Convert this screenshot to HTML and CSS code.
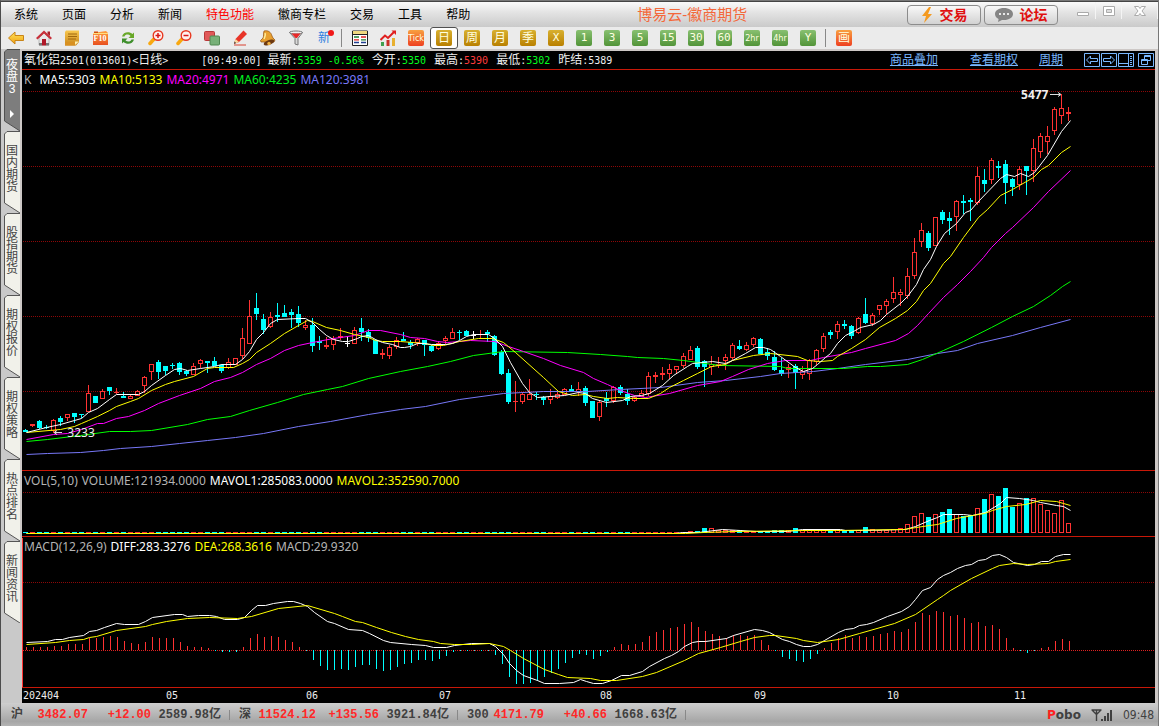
FILE: index.html
```html
<!DOCTYPE html>
<html lang="zh-CN">
<head>
<meta charset="utf-8">
<title>博易云-徽商期货</title>
<link rel="stylesheet" href="styles.css">
</head>
<body>
<svg class="defs" width="0" height="0" aria-hidden="true">
  <defs>
    <linearGradient id="gold" x1="0" y1="0" x2="0" y2="1"><stop offset="0" stop-color="#ffe45c"/><stop offset="1" stop-color="#f0a010"/></linearGradient>
    <linearGradient id="amber" x1="0" y1="0" x2="0" y2="1"><stop offset="0" stop-color="#f8c850"/><stop offset="1" stop-color="#c88418"/></linearGradient>
    <linearGradient id="ember" x1="0" y1="0" x2="0" y2="1"><stop offset="0" stop-color="#ffa040"/><stop offset="1" stop-color="#e85020"/></linearGradient>
  </defs>
  <symbol id="tab-light" viewBox="0 0 16 82"><path d="M.5 72V3L3 .5H16V82Z" fill="#f1f1ea"/><path d="M16 .5H3L.5 3V72L16 82" fill="none" stroke="#555"/></symbol>
  <symbol id="tab-dark" viewBox="0 0 16 82"><path d="M.5 72V3L3 .5H16V82Z" fill="#7d7d7d"/><path d="M16 .5H3L.5 3V72L16 82" fill="none" stroke="#505050"/></symbol>
</svg>

<div class="window">
  <header class="titlebar">
    <nav class="menu">
      <button>系统</button><button>页面</button><button>分析</button><button>新闻</button><button class="hot">特色功能</button><button>徽商专栏</button><button>交易</button><button>工具</button><button>帮助</button>
    </nav>
    <h1 class="app-title">博易云-徽商期货</h1>
    <div class="actions">
      <button class="action"><svg width="12" height="16" viewBox="0 0 12 16"><path d="M8 0 1 9h4L3 16l8-9H7l3-7Z" fill="#f49a20"/></svg>交易</button>
      <button class="action"><svg width="18" height="14" viewBox="0 0 18 14"><path d="M9 0c5 0 9 2.500 9 6s-4 6-9 6H7l-4 2 .6-3C1.300 10 0 8.200 0 6 0 2.500 4 0 9 0Z" fill="#858585"/><path d="M4 5h2v2H4zM8 5h2v2H8zM12 5h2v2h-2z" fill="#e8e8e8"/></svg>论坛</button>
    </div>
    <div class="window-controls">
      <button aria-label="最小化"><svg width="12" height="12" viewBox="0 0 12 12"><path d="M.5 7.500h11v3H.5z" fill="#fff" stroke="#aaa"/></svg></button>
      <button aria-label="最大化"><svg width="12" height="12" viewBox="0 0 12 12"><path d="M.5 1.500h11v9H.5z" fill="#fff" stroke="#aaa"/><path d="M3.500 4.500h5v3h-5z" fill="#ddd" stroke="#aaa"/></svg></button>
      <button aria-label="关闭"><svg width="12" height="12" viewBox="0 0 12 12"><path d="M.5 1.500h4L6 3.500l1.500-2h4L8 6l3.500 4.500h-4L6 8.500l-1.500 2h-4L4 6Z" fill="#fff" stroke="#aaa"/></svg></button>
    </div>
  </header>

  <div class="toolbar">
    <button aria-label="后退"><svg viewBox="0 0 16 16"><path d="M.5 8 7 2v3.500h8.500v5H7V14Z" fill="url(#gold)" stroke="#c88418"/></svg></button>
    <button aria-label="首页"><svg viewBox="0 0 16 16"><path d="M3 8 8 3l5 5v7H3z" fill="#e8e8e8" stroke="#999" stroke-width=".6"/><path d="M11.500 1.500H14V6l-2.500-2z" fill="#a8202a"/><path d="M0 8 8 .5 16 8l-1.500 1.500L8 3.500 1.500 9.500Z" fill="#c8303a"/><path d="M6 9h4v6.500H6z" fill="#b01828"/><path d="M3 13h3v2.500H3zM10 13h3v2.500h-3z" fill="#777"/></svg></button>
    <button aria-label="资讯"><svg viewBox="0 0 16 16"><path d="M2 .5h13V12l-3 3.500H1V2z" fill="url(#amber)"/><path d="M4 4h9M4 6.500h9M4 9h8" stroke="#a06810"/><path d="M1 12h10v3.500H1z" fill="#d89020"/><path d="m11 15 4-3.500h-4z" fill="#fff0b0"/></svg></button>
    <button aria-label="F10" class="f10"><svg viewBox="0 0 16 16"><path d="M1 3 14 1l2 2v12H1z" fill="url(#ember)"/><path d="M1 3.500h15" stroke="#ffe080"/><path d="M2 1.500h4V3H2z" fill="#d05010"/></svg><span>F10</span></button>
    <button aria-label="刷新"><svg viewBox="0 0 16 16"><path d="M2 6.500C3 2 9 .8 12.500 4L14 2.500V8H8.500l2-2C8.500 4 5.500 4 4.500 6.500Z" fill="#68a828"/><path d="M14 9.500c-1 4.500-7 5.700-10.500 2.500L2 13.500V8.500h5.500l-2 2c2 1.500 5 1.500 6-1Z" fill="#3f8f2c"/></svg></button>
    <button aria-label="放大"><svg viewBox="0 0 16 16"><path d="m6 9-4 4.500" stroke="#f8a810" stroke-width="3.500" stroke-linecap="round"/><circle cx="10" cy="5.500" r="4.800" fill="#fff1ef" stroke="#e83820" stroke-width="1.400"/><path d="M7.500 5.500h5M10 3v5" stroke="#d81818" stroke-width="1.500"/></svg></button>
    <button aria-label="缩小"><svg viewBox="0 0 16 16"><path d="m6 9-4 4.500" stroke="#f8a810" stroke-width="3.500" stroke-linecap="round"/><circle cx="10" cy="5.500" r="4.800" fill="#fff1ef" stroke="#e83820" stroke-width="1.400"/><path d="M7.500 5.500h5" stroke="#d81818" stroke-width="1.500"/></svg></button>
    <button aria-label="叠加"><svg viewBox="0 0 16 16"><rect x=".5" y="1.500" width="10" height="9" rx="1" fill="#e05858" stroke="#b83838"/><rect x="6" y="6" width="9.500" height="9" rx="1" fill="#78b078" stroke="#508850"/></svg></button>
    <button aria-label="画线"><svg viewBox="0 0 16 16"><path d="M11.500.5 15 4 7 12l-5 2 1.500-5Z" fill="#e83428"/><path d="M3.500 9 7 12l-5 2z" fill="#f8d8a0"/><path d="m2 14 2-1-1.400-1.400z" fill="#333"/><path d="M2 15h12" stroke="#d84030"/></svg></button>
    <button aria-label="预警"><svg viewBox="0 0 16 16"><path d="M4 1c4-1 7 1 8 5l1 2 2 2-1 2L1 12 .5 10.500 3 8c1-2 0-4 1-7Z" fill="#e8a030" stroke="#905010" stroke-width=".7"/><path d="M5 3c1 2 0 4-1 6" stroke="#fff0a0" stroke-width="1.300" fill="none"/><ellipse cx="9" cy="12.500" rx="5.500" ry="2.500" fill="#6c3810" transform="rotate(-20 9 12.500)"/><circle cx="9" cy="13.500" r="1.700" fill="#f0b040"/></svg></button>
    <button aria-label="筛选"><svg viewBox="0 0 16 16"><path d="M1.500 2.500h13L10 8.500V15l-3-1V8.500Z" fill="#d8d8d8" stroke="#777"/><ellipse cx="8" cy="2.500" rx="6.500" ry="1.500" fill="#eee" stroke="#777"/><path d="M3.500 3.500h9L9 8H7.500Z" fill="#e82828"/></svg></button>
    <button class="new-button">新<i></i></button>
    <i class="divider"></i>
    <button aria-label="报价"><svg viewBox="0 0 16 16"><path d="M.5 1h15v14.500H.5z" fill="#fff" stroke="#222"/><path d="M1 1h14v3H1z" fill="#f0d880"/><path d="M.5 4.500h15" stroke="#222"/><path d="M2 7h5M9 9.800h5" stroke="#208030" stroke-width="1.300"/><path d="M2 9.800h5M9 7h5" stroke="#e02020" stroke-width="1.300"/><path d="M2 12.500h5M9 12.500h5" stroke="#204090" stroke-width="1.300"/></svg></button>
    <button aria-label="走势"><svg viewBox="0 0 16 16"><path d="M1 12h3v4H1z" fill="#40a050"/><path d="M6.500 10h3v6h-3z" fill="#c83028"/><path d="M12 8h3v8h-3z" fill="#e8b030"/><path d="M.5 10 5 5.500l3 2.500 6-6" stroke="#e02020" stroke-width="2" fill="none"/><path d="M11.500.5H16V5Z" fill="#e02020"/></svg></button>
    <button><span class="tile orange narrow">Tick</span></button>
    <button class="selected"><span class="tile gold">日</span></button>
    <button><span class="tile gold">周</span></button>
    <button><span class="tile gold">月</span></button>
    <button><span class="tile gold">季</span></button>
    <button><span class="tile gold latin">X</span></button>
    <button><span class="tile green latin">1</span></button>
    <button><span class="tile green latin">3</span></button>
    <button><span class="tile green latin">5</span></button>
    <button><span class="tile green latin">15</span></button>
    <button><span class="tile green latin">30</span></button>
    <button><span class="tile green latin">60</span></button>
    <button><span class="tile green narrow">2hr</span></button>
    <button><span class="tile green narrow">4hr</span></button>
    <button><span class="tile green latin">Y</span></button>
    <i class="divider"></i>
    <button><span class="tile orange">画</span></button>
  </div>

  <div class="workspace">
    <nav class="tabs">
      <button class="tab active"><svg><use href="#tab-dark"/></svg><span>夜盘3</span><i></i></button>
      <button class="tab"><svg><use href="#tab-light"/></svg><span>国内期货</span></button>
      <button class="tab"><svg><use href="#tab-light"/></svg><span>股指期货</span></button>
      <button class="tab"><svg><use href="#tab-light"/></svg><span>期权报价</span></button>
      <button class="tab"><svg><use href="#tab-light"/></svg><span>期权策略</span></button>
      <button class="tab"><svg><use href="#tab-light"/></svg><span>热点排名</span></button>
      <button class="tab"><svg><use href="#tab-light"/></svg><span>新闻资讯</span></button>
    </nav>

    <main class="charts">
      <div class="quote">
        <span class="instrument">氧化铝<b>2501(013601)&lt;</b>日线<b>&gt;</b></span>
        <span class="time"><b>[09:49:00]</b></span>
        <span class="last">最新<b>:</b><b class="down">5359 -0.56%</b></span>
        <span>今开<b>:</b><b class="down">5350</b></span>
        <span>最高<b>:</b><b class="up">5390</b></span>
        <span>最低<b>:</b><b class="down">5302</b></span>
        <span>昨结<b>:5389</b></span>
        <div class="links">
          <a href="#overlay">商品叠加</a>
          <a href="#options">查看期权</a>
          <a href="#period">周期</a>
        </div>
        <div class="view-buttons">
          <button aria-label="向左"><svg viewBox="0 0 16 14"><path d="M.5.5h15v13H.5zM2.500 7l4-4v2.500h7v3h-7V11Z"/></svg></button>
          <button aria-label="向右"><svg viewBox="0 0 16 14"><path d="M.5.5h15v13H.5zM13.500 7l-4-4v2.500h-7v3h7V11Z"/></svg></button>
          <button aria-label="侧栏"><svg viewBox="0 0 16 14"><path d="M.5.5h15v13H.5zM10.500.5v13M.5 10.500h10M12 3.500h2M12 5.500h2M12 7.500h2M12 9.500h2M12 11.500h2"/></svg></button>
          <button aria-label="窗口" class="apart"><svg viewBox="0 0 16 14"><path d="M.5.5h15v13H.5zM6.500 6V2.500h6v5H10M3.500 6.500h6v5h-6zM6.500 3.500h6M3.500 7.500h6"/></svg></button>
        </div>
      </div>

      <section class="panel price">
        <svg id="price" viewBox="22 70 1133 400" preserveAspectRatio="none"></svg>
        <p class="legend"><span class="k">K</span><span class="white">MA5:5303</span><span class="yellow">MA10:5133</span><span class="magenta">MA20:4971</span><span class="green">MA60:4235</span><span class="violet">MA120:3981</span></p>
        <span class="mark high">5477</span>
        <span class="mark low">3233</span>
      </section>
      <section class="panel">
        <svg id="volume" viewBox="22 471 1133 65" preserveAspectRatio="none"></svg>
        <p class="legend"><span>VOL(5,10)</span><span>VOLUME:121934.0000</span><span class="white">MAVOL1:285083.0000</span><span class="yellow">MAVOL2:352590.7000</span></p>
      </section>
      <section class="panel">
        <svg id="macd" viewBox="22 537 1133 150" preserveAspectRatio="none"></svg>
        <p class="legend"><span>MACD(12,26,9)</span><span class="white">DIFF:283.3276</span><span class="yellow">DEA:268.3616</span><span>MACD:29.9320</span></p>
      </section>
      <div class="axis" id="axis"></div>
    </main>
  </div>

  <footer class="status">
    <div class="index"><span>沪</span><b>3482.07</b><b>+12.00</b><span>2589.98亿</span></div>
    <div class="index"><span>深</span><b>11524.12</b><b>+135.56</b><span>3921.84亿</span></div>
    <div class="index"><span>300</span><b>4171.79</b><b>+40.66</b><span>1668.63亿</span></div>
    <div class="tray">
      <strong><em>P</em>obo</strong>
      <svg width="22" height="12" viewBox="0 0 22 12"><path d="M.5 1h10M1 1l4.500 4.500L10 1M5.500 1v11" fill="none" stroke="#404040" stroke-width="1.400"/><path d="M10 10h2v2h-2zM13 7h2v5h-2zM16 4h2v8h-2zM19 1h2v11h-2z" fill="#404040"/></svg>
      <time>09:48</time>
    </div>
  </footer>
</div>
<script src="chart.js"></script>
</body>
</html>
```
FILE: styles.css
```css
* { box-sizing: border-box; }

body {
  margin: 0;
  font: 12px/16px "Liberation Sans", "Noto Sans CJK SC", sans-serif;
  color: #000;
}

button {
  margin: 0;
  padding: 0;
  border: 0;
  background: none;
  font: inherit;
  color: inherit;
}

.defs { position: absolute; }

.window {
  display: flex;
  flex-direction: column;
  height: 100vh;
  overflow: hidden;
  border-top: 1px solid #777;
  border-left: 1px solid #4c4c4c;
  border-right: 1px solid #777;
  background: #cdc8c6;
}

/* title bar */
.titlebar {
  display: flex;
  align-items: center;
  flex: 0 0 26px;
  border-top: 1px solid #444;
  background: linear-gradient(#fafafa, #e4e4e4 40%, #cacaca);
}

.menu {
  display: flex;
  flex: 0 0 55%;
  gap: 24px;
  padding-left: 13px;
}

.menu .hot { color: #f00; }

.app-title {
  margin: 0;
  font-size: 15px;
  font-weight: 400;
  white-space: nowrap;
  color: #f4683a;
}

.actions {
  display: flex;
  flex: 1;
  justify-content: flex-end;
  gap: 3px;
}

.action {
  display: flex;
  align-items: center;
  justify-content: center;
  gap: 7px;
  width: 74px;
  height: 20px;
  border: 1px solid #8c8c8c;
  border-radius: 4px;
  background: linear-gradient(#f8f8f8, #d2d2d2);
  font-size: 14px;
  font-weight: 700;
  color: #e01010;
}

.window-controls {
  display: grid;
  grid-template-columns: 26px 26px 36px;
  align-self: stretch;
  padding: 0 0 8px 12px;
}

.window-controls button {
  border-right: 1px solid #f4f4f4;
}

.window-controls svg { display: block; margin: 0 auto; }

/* toolbar */
.toolbar {
  display: flex;
  align-items: center;
  flex: 0 0 22px;
  padding-left: 1px;
  background: #ebebeb;
}

.toolbar button {
  position: relative;
  display: flex;
  align-items: center;
  justify-content: center;
  width: 28px;
  height: 22px;
}

.toolbar svg { width: 16px; height: 16px; }

.toolbar .selected {
  border: 1px solid #505050;
  border-radius: 3px;
  background: #fff;
}

.divider {
  width: 1px;
  height: 18px;
  margin: 0 4px 0 3px;
  background: #888;
}

.f10 span {
  position: absolute;
  top: 7px;
  font: 700 8px/10px "Liberation Serif", serif;
  color: #fff;
}

.toolbar .new-button { color: #3080e0; }

.new-button i {
  position: absolute;
  top: 3px;
  right: 4px;
  width: 6px;
  height: 6px;
  border-radius: 3px;
  background: #f01818;
}

.tile {
  display: flex;
  align-items: center;
  justify-content: center;
  width: 16px;
  height: 16px;
  border-radius: 2px;
  font-size: 12px;
  line-height: 16px;
  color: #ffffe0;
}

.gold { background: linear-gradient(#d8b030, #b98000); }
.tile.green { background: linear-gradient(#88c070, #529438); }
.orange { background: linear-gradient(#f8a040, #ee4020); }
.tile.latin { font-family: "DejaVu Sans Mono", monospace; font-size: 11px; }
.tile.narrow { font-family: "Liberation Sans Narrow", "DejaVu Sans Condensed", sans-serif; font-size: 9px; }

/* workspace */
.workspace {
  display: flex;
  flex: 1;
  min-height: 0;
  padding-right: 3px;
}

.tabs {
  display: flex;
  flex-direction: column;
  flex: 0 0 19px;
  padding-left: 3px;
  background: #c9c9c9;
}

.tab {
  position: relative;
  display: flex;
  flex-direction: column;
  align-items: center;
  flex: 0 0 82px;
  width: 16px;
  padding-top: 14px;
  color: #444;
}

.tab svg {
  position: absolute;
  top: 0;
  left: 0;
  width: 16px;
  height: 82px;
}

.tab span {
  position: relative;
  width: 12px;
  line-height: 12px;
  text-align: center;
  word-break: break-all;
}

.tab.active { padding-top: 10px; color: #fff; }

.tab i {
  position: relative;
  margin-top: 15px;
  border: 4px solid transparent;
  border-left: 4px solid #fff;
  border-right: 0;
}

.charts {
  display: grid;
  grid-template-rows: 19px 401fr 66fr 151fr 15px;
  flex: 1;
  min-width: 0;
  margin: 2px 0 0 2px;
  background: #000;
  color: #eee;
}

.quote {
  display: flex;
  align-items: center;
  gap: 8px;
  padding-left: 2px;
  border-bottom: 1px solid #c81808;
  white-space: pre;
}

.quote b {
  font: 10px/16px "DejaVu Sans Mono", monospace;
}

.quote .time { margin-left: 25px; }
.quote .last { margin-left: -2px; }
.quote .down { color: #00ff1e; }
.quote .up { color: #ff3c3c; }

.links {
  display: flex;
  margin-left: auto;
}

.links a { margin-left: 32px; color: #7ab8ff; }
.links a:last-child { margin-left: 21px; }

.view-buttons {
  display: flex;
  gap: 1px;
  padding: 0 1px 0 13px;
}

.view-buttons svg {
  display: block;
  width: 16px;
  height: 14px;
  fill: none;
  stroke: #7ab8ff;
}

.view-buttons .apart { margin-left: 3px; }

.panel {
  position: relative;
  min-height: 0;
  border-bottom: 1px solid #c81808;
}

.panel > svg {
  position: absolute;
  inset: 0;
  width: 100%;
  height: 100%;
}

.legend {
  position: relative;
  display: flex;
  gap: 4px;
  margin: 0;
  padding: 2px 0 0 2px;
  font: 12px/16px "Noto Sans", "DejaVu Sans", sans-serif;
  color: #b4b4b4;
}

.legend .k { margin-right: 4px; }
.white { color: #fff; }
.yellow { color: #ff0; }
.magenta { color: #f0f; }
.legend .green { color: #00f020; }
.violet { color: #7878f8; }

.mark {
  position: absolute;
  font: 700 12px/14px "Noto Sans", sans-serif;
}

.mark.high { top: 4.5%; right: 9.400%; }
.mark.low { top: 89%; left: 4%; font-weight: 400; }

.axis {
  position: relative;
  font: 10px/15px "DejaVu Sans Mono", monospace;
}

.axis span { position: absolute; }

/* chart drawing */
.grid { fill: none; stroke: #8c0808; stroke-dasharray: 1 1; shape-rendering: crispEdges; }
.zero { fill: none; stroke: #e02020; stroke-dasharray: 1 1; shape-rendering: crispEdges; }
.rise { fill: #ff3232; fill-rule: evenodd; shape-rendering: crispEdges; }
.fall { fill: #0ff; shape-rendering: crispEdges; }
.flat { fill: #fff; shape-rendering: crispEdges; }
.line { fill: none; stroke-width: 1; }
.line-white { stroke: #fff; }
.line-yellow { stroke: #ff0; }
.line-magenta { stroke: #f0f; }
.line-green { stroke: #0f0; }
.line-violet { stroke: #7878f8; }
.arrow { fill: none; stroke: #ddd; }

/* status bar */
.status {
  display: flex;
  align-items: center;
  flex: 0 0 23px;
  padding-left: 10px;
  background: linear-gradient(#cecece, #a6a6a6 80%, #b4b4b4);
  font: 700 12px/16px "Liberation Mono", "Noto Sans CJK SC", monospace;
  color: #404040;
}

.index {
  display: grid;
  grid-template-columns: 20px 57px 63px 70px;
  justify-items: end;
  width: 228px;
  padding-right: 8px;
  white-space: nowrap;
  background: linear-gradient(#888, #888) 218px 50% / 1px 10px no-repeat;
}

.index > :first-child { justify-self: start; }
.index b { color: #ff2828; }

.tray {
  display: flex;
  align-items: center;
  gap: 10px;
  margin-left: auto;
  padding-right: 4px;
}

.tray strong { font: 700 12px/16px "DejaVu Sans", sans-serif; }
.tray em { font-style: normal; color: #ff2020; }
.tray time { font: 12px/16px "DejaVu Sans Condensed", sans-serif; }
```
FILE: chart.js
```js
// Each bar: direction (r = rise, c = fall, w = unchanged), high, body top, body bottom, low.
const bars = `c429,430,432,432 r424,424,426,427 c420,421,428,429 c425,427,428,429 r419,420,431,433
c416,418,422,426 r414,414,418,421 c413,413,417,423 c414,414,415,418 r385,393,412,412
c396,396,403,403 r389,391,399,399 c387,387,391,395 r388,392,393,394 c392,396,398,398
r394,396,399,399 r390,391,396,396 r376,377,386,393 r364,364,372,380 c360,362,372,379
c366,366,371,375 c363,365,366,369 c362,363,372,375 c370,371,374,376 r363,366,375,375
r359,360,364,368 c361,361,363,373 c357,361,366,366 c364,365,371,373 r358,362,368,369
r358,358,365,365 r328,338,356,359 r300,316,344,344 c293,308,314,320 c314,319,330,334
r312,317,327,328 c303,315,317,322 c305,313,317,317 c309,312,315,328 c306,314,323,327
r320,325,328,330 c318,325,346,352 c336,341,343,350 r337,345,347,349 r336,339,345,350
r328,336,338,340 w337,343,344,347 r327,330,344,344 c318,328,332,341 c329,332,338,342
c339,340,354,354 r349,353,355,359 r345,347,356,359 r337,340,347,349 c332,339,341,341
c340,342,345,349 r338,339,343,346 c340,340,345,356 c345,346,351,352 r342,343,349,350
r336,338,341,344 r328,332,339,339 c330,332,333,340 c330,331,336,336 w331,335,336,339
r330,334,335,339 c330,332,334,342 c335,336,355,356 c350,352,374,375 c369,373,402,404
r381,401,402,412 r393,394,402,404 r379,394,400,400 c392,394,395,400 c396,397,400,405
r389,396,400,404 r392,394,398,399 r388,389,395,395 c385,389,391,392 r382,389,392,396
c386,388,403,406 c401,401,418,418 r400,402,417,421 c392,398,401,407 r386,387,401,403
c385,387,393,395 c389,394,401,405 r396,397,401,402 r390,393,397,397 r372,376,394,396
r372,375,377,383 r367,373,375,380 r364,369,374,379 r366,366,370,374 r353,356,366,368
r346,350,360,360 c346,348,367,369 c360,361,367,387 r356,364,367,375 r357,364,366,368
r354,357,361,370 r343,345,358,360 c340,346,349,350 r342,345,350,351 r337,338,345,347
c338,339,354,354 c348,352,356,360 c351,357,370,371 c358,370,374,376 r364,367,370,378
c364,366,373,389 r366,371,375,379 r359,360,374,380 r349,350,362,365 r333,336,349,352
c330,332,335,339 r321,324,332,339 c320,324,326,329 c325,326,336,339 r317,318,333,334
c298,314,323,324 r313,315,324,326 r305,305,310,315 r299,301,306,314 r277,292,299,303
r289,292,295,306 r268,276,296,299 r238,252,276,279 r223,230,242,247 c231,233,248,251
r217,217,246,246 c210,212,220,224 c212,218,221,235 r200,201,217,231 c195,201,203,214
c198,200,202,221 r167,176,203,205 c169,180,184,192 r158,160,180,184 c161,166,168,178
c160,164,183,204 c178,179,187,196 r166,169,185,190 c166,166,171,195 r139,148,171,182
r133,136,152,158 r126,136,142,154 r107,109,131,135 r94,108,116,124 r107,112,114,121`
  .split(/\s+/)
  .map(s => [s[0], ...s.slice(1).split(',').map(Number)]);

// Bar tops of the last 55 volumes; the earlier ones are one unit high.
const volumeTops = [531,531,528,528,530,530,530,530,531,531,531,531,530,530,530,528,530,530,530,530,
  530,530,530,530,530,527,529,530,530,529,528,524,516,513,517,514,512,509,514,516,515,508,499,494,
  496,488,507,503,498,498,504,510,513,500,523];

const histogram = [3,3,3,3,4,4,6,6,6,12,12,13,14,13,9,7,6,8,13,12,12,12,8,4,3,3,2,0,-2,-2,-2,3,12,16,
  13,14,13,10,8,3,0,-10,-16,-20,-20,-19,-20,-17,-15,-15,-19,-21,-20,-17,-14,-13,-10,-10,-11,-9,-6,-2,
  0,0,0,0,0,-5,-14,-27,-34,-34,-33,-31,-27,-23,-19,-13,-8,-4,-5,-9,-6,-2,3,6,5,6,8,14,18,20,22,23,26,
  28,23,19,16,14,12,15,15,14,15,10,5,0,-7,-9,-11,-12,-9,-4,2,7,12,15,12,14,13,14,16,17,19,18,21,28,
  37,35,39,38,34,35,32,27,28,24,25,21,12,2,0,-3,0,2,3,9,11,9];

const averages = {
  violet: '26,454 47,453 80,452 103,450 120,448 151,446 179,443 207,440 235,437 263,433 298,426 330,421 368,414 400,409 425,406 459,399 503,393 543,391 587,391 620,389 660,387 697,382 725,380 760,376 780,373 813,371 837,368 865,364 907,359 937,353 957,350 977,343 1012,335 1040,327 1070,319',
  green: '26,441 47,439 80,435 109,431 130,431 151,430 187,424 207,419 230,416 249,410 277,402 303,394 327,389 342,386 368,378 400,371 427,366 450,361 473,355 503,351 567,352 600,354 627,356 637,357 663,358 683,360 720,365 780,366 787,368 843,368 867,366 880,366 907,364 922,359 943,350 963,341 991,327 1012,316 1033,306 1050,295 1062,286 1070,281',
  magenta: '26,439 53,434 67,433 81,429 97,423 103,423 116,418 128,416 144,410 158,403 179,395 200,388 214,381 230,377 242,372 256,364 270,358 284,350 298,345 312,342 333,338 354,335 368,330 380,330 400,334 410,337 424,338 437,341 447,342 470,340 494,341 508,346 523,351 543,358 560,365 583,372 593,378 607,384 620,390 634,395 645,397 669,393 697,385 720,381 732,376 748,369 767,363 785,360 810,360 823,357 851,352 865,348 895,340 908,333 917,325 928,313 943,297 957,284 970,271 983,257 991,247 1005,233 1012,227 1033,207 1048,191 1070,170',
  yellow: '26,432 60,429 74,426 81,423 88,420 97,416 109,410 116,406 130,401 138,398 151,390 165,384 174,381 193,376 207,368 214,367 233,367 242,363 249,359 256,352 270,343 284,333 298,325 307,320 312,321 326,327 340,330 354,334 368,337 375,340 382,341 400,341 424,343 433,345 443,345 459,341 478,338 492,338 503,342 515,352 543,377 558,391 572,395 585,394 593,396 607,398 617,397 633,398 648,398 660,393 669,387 683,380 697,373 711,366 725,364 732,360 753,355 770,353 797,356 807,360 820,361 832,360 837,356 851,348 865,339 879,327 895,318 907,310 916,301 923,290 930,283 943,263 950,256 963,237 978,217 987,209 1000,195 1012,189 1033,177 1041,169 1048,165 1061,152 1070,146',
  white: '26,432 46,427 60,424 74,420 81,418 88,412 97,408 109,399 116,394 138,394 144,391 151,385 165,375 174,369 180,368 187,370 200,368 214,366 221,364 235,364 242,359 249,351 256,339 263,332 270,323 277,319 298,318 305,318 312,322 319,329 326,335 333,339 342,341 348,341 357,338 361,336 368,335 375,339 382,342 392,344 400,347 404,347 410,346 417,343 424,343 431,344 445,344 452,343 459,340 466,336 473,334 488,334 494,338 502,346 510,362 522,383 529,392 537,397 550,396 564,395 578,392 585,393 592,398 606,402 622,400 630,396 641,395 649,393 662,385 673,375 687,366 692,363 712,361 725,363 732,360 745,353 755,347 763,347 770,349 780,356 795,367 803,371 812,368 817,364 825,357 830,353 837,343 845,335 853,331 860,327 873,324 880,320 886,314 900,303 907,296 916,284 923,269 930,259 936,246 944,233 956,223 965,212 970,210 977,202 1000,178 1006,174 1014,176 1020,173 1028,176 1034,172 1047,155 1061,131 1070,120'
};

const volumeAverages = {
  white: '26,533 675,533 682,532 698,532 722,529 740,530 756,531 787,531 802,529 840,529 845,530 862,530 905,529 915,526 929,520 937,517 943,514 963,514 972,515 985,512 1000,503 1006,497 1019,498 1026,499 1033,500 1040,502 1056,505 1063,506 1070,510',
  yellow: '26,533 685,533 703,532 734,531 807,530 836,530 903,529 916,527 929,525 937,524 956,518 972,515 984,513 992,510 1006,506 1025,504 1040,500 1056,501 1063,503 1070,505'
};

const macdLines = {
  white: '26,642 47,641 55,639 62,639 69,637 83,635 89,631 96,630 104,627 116,623 124,624 138,624 145,621 152,617 174,614 182,614 187,616 198,615 209,615 216,616 224,619 237,619 244,617 251,610 257,605 265,605 273,603 287,601 293,601 300,603 307,606 314,612 327,621 334,623 348,629 362,630 369,633 383,640 390,642 411,644 425,645 433,647 446,647 454,645 471,643 489,643 495,646 503,654 509,663 516,670 523,675 537,680 544,683 559,683 573,682 580,679 586,681 593,683 602,683 611,680 621,675 629,675 642,671 649,666 664,658 671,655 678,651 684,646 692,642 698,641 705,641 726,638 733,635 754,629 762,630 769,632 782,639 789,641 796,644 803,646 810,646 817,644 824,640 838,632 845,629 853,628 859,625 866,624 873,622 887,616 901,611 909,606 915,599 922,590 930,587 937,579 943,575 950,572 957,568 965,565 971,564 978,560 985,559 992,555 999,554 1006,557 1013,562 1027,565 1034,564 1041,561 1048,561 1055,556 1063,554 1070,554',
  yellow: '26,644 55,642 69,640 83,639 89,637 96,636 116,630 145,626 152,624 166,621 187,618 209,617 237,618 251,616 278,608 307,605 334,613 342,616 355,621 362,622 376,627 391,632 405,636 418,639 433,641 440,643 454,644 471,644 489,643 503,646 510,650 523,658 544,669 558,674 567,677 590,678 600,680 616,680 642,676 656,672 684,660 692,656 698,653 720,647 740,641 754,637 769,635 775,635 796,638 803,640 817,642 838,639 859,633 894,623 915,614 937,599 943,595 950,590 971,578 992,568 999,565 1013,563 1027,564 1048,563 1055,561 1070,559'
};

const months = [['202404', 23], ['05', 166], ['06', 306], ['07', 439], ['08', 600], ['09', 754], ['10', 887], ['11', 1014]];

const LEFT = 22;
const WIDTH = 1133;
const barX = i => 23 + 7 * i;
const box = (x, y, w, h) => h > 0 ? `M${x} ${y}h${w}v${h}h${-w}z` : '';
const hollow = (x, y, w, h) => box(x, y, w, h) + (h > 2 ? box(x + 1, y + 1, w - 2, h - 2) : '');
const path = (cls, d) => `<path class="${cls}" d="${d}"/>`;
const rules = (ys, cls = 'grid') => path(cls, ys.map(y => `M${LEFT + 1} ${y + 0.5}H${LEFT + WIDTH}`).join(''));
const lines = set => '<g transform="translate(.5 .5)">' +
  Object.entries(set).map(([name, pts]) => `<polyline class="line line-${name}" points="${pts}"/>`).join('') + '</g>';

const price = { r: '', c: '', w: '' };
const volume = { r: '', c: '' };
bars.forEach(([type, high, top, bottom, low], i) => {
  const x = barX(i);
  price[type] += box(x + 2, high, 1, top - high) + box(x + 2, bottom, 1, low - bottom) +
    (type === 'r' ? hollow : box)(x, top, 5, bottom - top);
  const volTop = i < 95 ? 532 : volumeTops[i - 95];
  if (type === 'c') volume.c += box(x, volTop, 5, 533 - volTop);
  else volume.r += hollow(x, volTop, 5, 533 - volTop);
});

document.getElementById('price').innerHTML =
  rules([91, 166, 241, 316, 391]) +
  path('rise', price.r) + path('fall', price.c) + path('flat', price.w) + lines(averages) +
  path('arrow', 'M1050 94.500h10M1058 92.500l3 2l-3 2M54 432.500h8M57 430.500l-3 2l3 2');

document.getElementById('volume').innerHTML =
  rules([492]) + path('rise', volume.r) + path('fall', volume.c) + lines(volumeAverages);

let gains = '';
let losses = '';
histogram.forEach((v, i) => {
  const x = 26 + 7 * i;
  if (v > 0) gains += box(x, 650 - v, 1, v);
  else losses += box(x, 650, 1, Math.max(1, -v));
});
document.getElementById('macd').innerHTML =
  rules([582]) + rules([650], 'zero') + path('rise', gains + box(22, 538, 1, 149)) + path('fall', losses) + lines(macdLines);

document.getElementById('axis').innerHTML = months
  .map(([label, x]) => `<span style="left:${((x - LEFT) / WIDTH * 100).toFixed(2)}%">${label}</span>`)
  .join('');
```
